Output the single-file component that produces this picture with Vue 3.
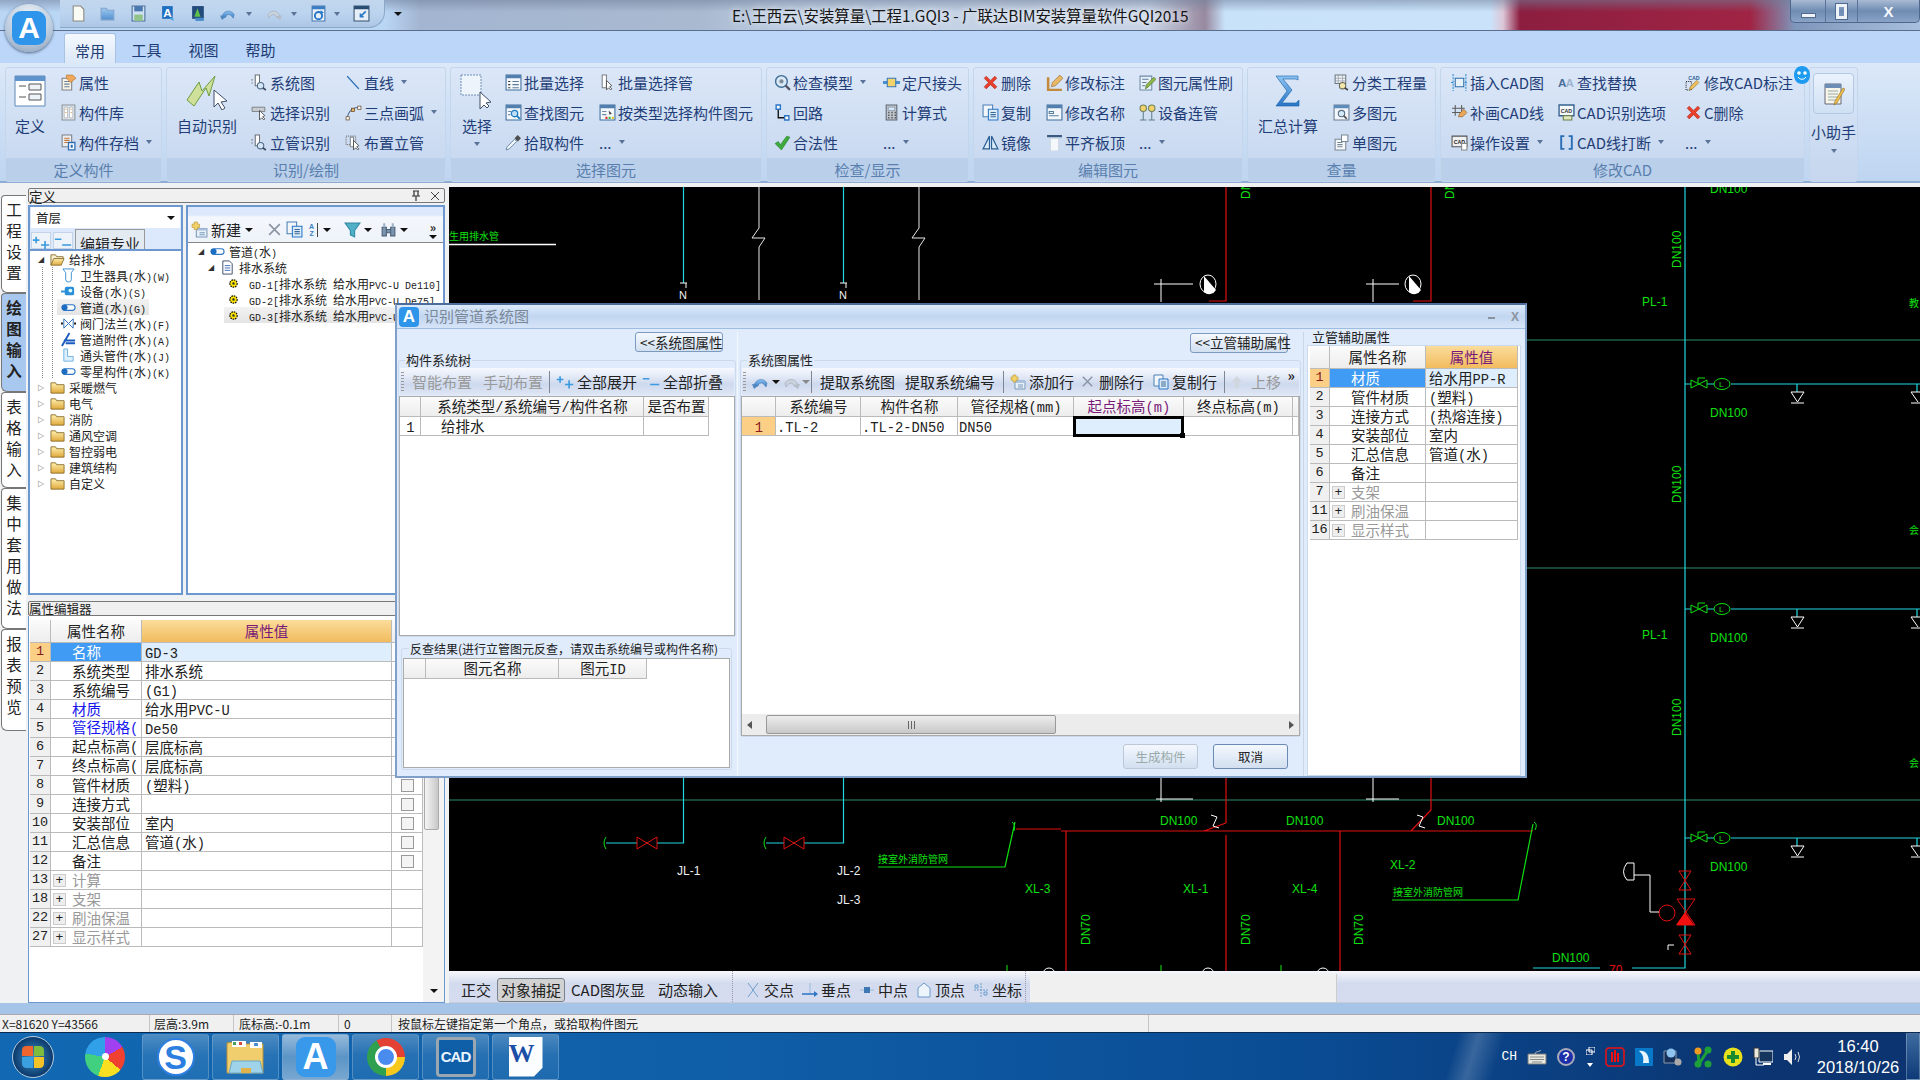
<template>
  <div class="app">
    <!-- shared icons -->
    <svg class="sprite" width="0" height="0">
      <defs>
        <linearGradient id="gBlue" x1="0" y1="0" x2="0" y2="1"><stop offset="0" stop-color="#8fc4f2" /><stop offset="1" stop-color="#2a76c6" /></linearGradient>
        <linearGradient id="gFolder" x1="0" y1="0" x2="0" y2="1"><stop offset="0" stop-color="#fff0b0" /><stop offset="1" stop-color="#e0a93a" /></linearGradient>
      </defs>
      <symbol id="i-doc" viewBox="0 0 16 16"><path d="M3 1h7l3 3v11H3z" fill="#fbfbf6" stroke="#8a8a80" /></symbol>
      <symbol id="i-open" viewBox="0 0 16 16"><path d="M1 14V3h5l1 2h6v9z" fill="url(#gBlue)" stroke="#6a90bd" opacity=".7" /></symbol>
      <symbol id="i-disk" viewBox="0 0 16 16"><path d="M2 1h12v14H2z" fill="#cfe0f2" stroke="#4d6f99" /><path d="M4 1h8v5H4z" fill="#4a78ae" /><path d="M4 9h8v6H4z" fill="#8fc38a" /></symbol>
      <symbol id="i-a" viewBox="0 0 16 16"><path d="M2 1h10v12H2z" fill="#1f6fc0" /><text x="3" y="11" class="ic-t" fill="#fff">A</text><path d="M9 13l4 2-1-4z" fill="#4aa3df" /></symbol>
      <symbol id="i-ag" viewBox="0 0 16 16"><path d="M2 1h11v12H2z" fill="#234a7c" /><path d="M7 3l3 8H4z" fill="#5fc04a" /><path d="M5 12h8v3H5z" fill="#4a8bc9" /></symbol>
      <symbol id="i-undo" viewBox="0 0 18 16"><path d="M2 12C3 5 11 3 15 9l-1 4C11 8 7 8 6 12z" fill="url(#gBlue)" stroke="#4f7eb2" stroke-width=".6" /><path d="M0 10l7 1-5 4z" fill="#4f86c0" /></symbol>
      <symbol id="i-redo" viewBox="0 0 18 16"><path d="M16 12C15 5 7 3 3 9l1 4c3-5 7-5 8-1z" fill="#c9d2dd" stroke="#9aa6b4" stroke-width=".6" /><path d="M18 10l-7 1 5 4z" fill="#b3bcc7" /></symbol>
      <symbol id="i-refresh" viewBox="0 0 16 16"><path d="M2 1h12v14H2z" fill="#e8f0fa" stroke="#4a78ae" /><path d="M2 1h12v3H2z" fill="#3b7dc2" /><circle cx="8" cy="10" r="3.4" fill="none" stroke="#2a76c6" stroke-width="1.8" /><path d="M10 5l3 2-3 2z" fill="#2a76c6" /></symbol>
      <symbol id="i-win" viewBox="0 0 16 16"><path d="M1 1h14v14H1z" fill="#e6eef7" stroke="#39536f" /><path d="M1 1h14v3H1z" fill="#274c73" /><path d="M12 6L7 11M7 8v3h3" fill="none" stroke="#2a76c6" stroke-width="1.5" /></symbol>

      <symbol id="i-prop" viewBox="0 0 16 16"><path d="M2 4h9v11H2z" fill="#f7f3e6" stroke="#7d8087" /><path d="M4 7h5M4 9.500h5M4 12h5" stroke="#6d7f96" /><path d="M6 1h6l3 3-5 4-4-4z" fill="#eea85c" stroke="#b66f2c" stroke-width=".6" /></symbol>
      <symbol id="i-lib" viewBox="0 0 16 16"><path d="M2 1h12v14H2z" fill="#dde3e8" stroke="#8b949c" /><path d="M4 3h3v10H4zM9 3h3v10H9z" fill="#fff" stroke="#a2a8ad" stroke-width=".6" /><path d="M5 5h1M5 8h1M10 5h1M10 8h1" stroke="#d59a4a" /></symbol>
      <symbol id="i-store" viewBox="0 0 16 16"><path d="M2 1h9v11H2z" fill="#eceff2" stroke="#7d8087" /><path d="M4 4h5M4 6h5M4 8h5" stroke="#c2773a" /><path d="M8 8h6v7H8z" fill="#fff" stroke="#2a6db5" stroke-width="1.2" /><path d="M10 10h2v3h-2z" fill="#2a6db5" /></symbol>
      <symbol id="i-sys" viewBox="0 0 16 16"><path d="M4 1h4v10H4z" fill="#fff" stroke="#6c7076" /><circle cx="9" cy="11" r="3" fill="#d5e7f7" stroke="#506c8a" /><path d="M11 13l3 2" stroke="#3d4c60" stroke-width="1.6" /><path d="M1 5v1M1 8v1" stroke="#555" /></symbol>
      <symbol id="i-line" viewBox="0 0 16 16"><path d="M2 2l11 12" stroke="#2a6db5" stroke-width="1.3" fill="none" /></symbol>
      <symbol id="i-pick" viewBox="0 0 16 16"><path d="M1 3h12v4H1z" fill="#c8cdd2" stroke="#666" stroke-width=".7" /><path d="M8 6v9l2-2 2 2 1-1-2-2 2-1z" fill="#fff" stroke="#444" stroke-width=".8" /></symbol>
      <symbol id="i-arc" viewBox="0 0 16 16"><path d="M2 14C3 6 8 3 14 3" fill="none" stroke="#4f6f8f" /><rect x="1" y="12" width="3" height="3" fill="#fff" stroke="#6a4a2a" stroke-width=".7" /><rect x="6" y="4" width="3" height="3" fill="#e9b468" stroke="#6a4a2a" stroke-width=".7" /><rect x="12" y="2" width="3" height="3" fill="#fff" stroke="#6a4a2a" stroke-width=".7" /></symbol>
      <symbol id="i-place" viewBox="0 0 16 16"><path d="M1 2h9v8H1z" fill="none" stroke="#777" stroke-dasharray="1 1" /><path d="M5 3h3v9H5z" fill="#fff" stroke="#6c7076" stroke-width=".8" /><path d="M8 6v9l2-2 2 2 1-1-2-2 2-1z" fill="#fff" stroke="#444" stroke-width=".8" /></symbol>
      <symbol id="i-batch" viewBox="0 0 16 16"><path d="M1 1h14v14H1z" fill="#f5f8fb" stroke="#3f6d9c" /><path d="M1 1h14v3H1z" fill="#527fae" /><path d="M3 7h2M3 10h2M3 13h2" stroke="#333" /><path d="M7 7h6M7 10h6M7 13h6" stroke="#5d7c9c" /></symbol>
      <symbol id="i-psel" viewBox="0 0 16 16"><path d="M3 1h4v12H3z" fill="#fff" stroke="#7d8188" /><path d="M7 6v9l2-2 2 2 1-1-2-2 2-1z" fill="#fff" stroke="#444" stroke-width=".8" /></symbol>
      <symbol id="i-find" viewBox="0 0 16 16"><path d="M1 1h14v14H1z" fill="#f5f8fb" stroke="#3f6d9c" /><path d="M1 1h14v3H1z" fill="#527fae" /><circle cx="9" cy="9" r="3" fill="#bfe0f7" stroke="#1c7cc4" stroke-width="1.2" /><path d="M11 11l3 3" stroke="#1c7cc4" stroke-width="1.8" /><path d="M3 7h3M3 10h2" stroke="#6a87a5" /></symbol>
      <symbol id="i-tsel" viewBox="0 0 16 16"><path d="M1 1h14v14H1z" fill="#f5f8fb" stroke="#3f6d9c" /><path d="M1 1h14v3H1z" fill="#527fae" /><path d="M3 7h4M3 10h4" stroke="#6a87a5" /><path d="M6 12h2v2H6z" fill="#d33" /><path d="M9 12h2v2H9z" fill="#4b4" /><path d="M12 12h2v2h-2z" fill="#dc3" /><path d="M9 6l3 3-2 1z" fill="#333" /></symbol>
      <symbol id="i-drop" viewBox="0 0 16 16"><path d="M1 15l1-3 7-7 2 2-7 7z" fill="#f2f6fa" stroke="#5a7f9f" stroke-width=".8" /><path d="M9 4l3-3 3 3-3 3z" fill="#4d4d4d" /></symbol>
      <symbol id="i-chk" viewBox="0 0 16 16"><circle cx="7" cy="7" r="5.500" fill="#d8e8f5" stroke="#3e6b95" stroke-width="1.3" /><circle cx="7" cy="7" r="2" fill="#7f8c99" /><path d="M11 11l4 4" stroke="#556" stroke-width="2.2" /></symbol>
      <symbol id="i-joint" viewBox="0 0 16 16"><path d="M0 8h16" stroke="#4a90d0" stroke-width="3" /><path d="M4 4h8v8H4z" fill="#f2d36a" stroke="#3877b8" /></symbol>
      <symbol id="i-loop" viewBox="0 0 16 16"><path d="M4 3v10h9" fill="none" stroke="#111" stroke-width="1.3" /><path d="M2 1h4v4H2zM10 11h4v4h-4z" fill="#fff" stroke="#2a76c6" stroke-width="1.3" /></symbol>
      <symbol id="i-calc" viewBox="0 0 16 16"><path d="M3 1h10v14H3z" fill="#bfc5cc" stroke="#5c6670" /><path d="M5 3h6v3H5z" fill="#d9ecfb" stroke="#6a7a8c" stroke-width=".5" /><path d="M5 8h1M8 8h1M11 8h1M5 10.500h1M8 10.500h1M11 10.500h1M5 13h1M8 13h1M11 13h1" stroke="#333" stroke-width="1.4" /></symbol>
      <symbol id="i-ok" viewBox="0 0 16 16"><path d="M1 9l3-2 2 3 6-8 3 1-8 12z" fill="#3faa3c" stroke="#1d7a22" stroke-width=".5" /></symbol>
      <symbol id="i-del" viewBox="0 0 16 16"><path d="M2 4l2-2 4 4 4-4 2 2-4 4 4 4-2 2-4-4-4 4-2-2 4-4z" fill="#e8402a" stroke="#a8241a" stroke-width=".5" /></symbol>
      <symbol id="i-label" viewBox="0 0 16 16"><path d="M2 3v12h13" fill="none" stroke="#c28a3a" stroke-width="2.400" /><path d="M5 12l1-4 7-7 3 3-7 7z" fill="#e7b868" stroke="#9a6a2a" stroke-width=".6" /></symbol>
      <symbol id="i-brush" viewBox="0 0 16 16"><path d="M1 2h11v13H1z" fill="#e9f0f7" stroke="#6d8aa8" /><path d="M3 5h6M3 8h4M3 11h3" stroke="#5a7f9f" /><path d="M6 14l1-4 7-7 2 2-7 7z" fill="#8fb648" stroke="#4b6f25" stroke-width=".6" /></symbol>
      <symbol id="i-copy" viewBox="0 0 16 16"><path d="M1 1h9v11H1z" fill="#f3f7fb" stroke="#4a7fb3" /><path d="M6 5h9v10H6z" fill="#dcebf8" stroke="#2a76c6" /><path d="M8 8h5M8 10h5M8 12h5" stroke="#3a6a9a" /></symbol>
      <symbol id="i-rename" viewBox="0 0 16 16"><path d="M1 1h14v14H1z" fill="#f3f7fb" stroke="#3f6d9c" /><path d="M1 1h14v3H1z" fill="#527fae" /><path d="M3 7h4v2H3zM3 11h9" stroke="#5a7f9f" fill="none" /></symbol>
      <symbol id="i-link" viewBox="0 0 16 16"><circle cx="4" cy="4" r="3" fill="#f2d36a" stroke="#6f7f55" /><circle cx="12" cy="4" r="3" fill="#f2d36a" stroke="#6f7f55" /><path d="M4 7v8M12 7v8M1 15h6M9 15h6" stroke="#5f7f8f" /></symbol>
      <symbol id="i-mirror" viewBox="0 0 16 16"><path d="M7 2v12H1zM9 2v12h6z" fill="#dcebf8" stroke="#2a5f96" stroke-width="1.1" /></symbol>
      <symbol id="i-align" viewBox="0 0 16 16"><path d="M1 1h14v2H1z" fill="#3a5a80" /><path d="M4 4h8v12H4z" fill="#f4f8fb" stroke="#cbd6e1" /></symbol>
      <symbol id="i-cat" viewBox="0 0 16 16"><path d="M2 1h10v8H2z" fill="#eef2f6" stroke="#6c7680" /><path d="M5 1v8M9 1v8M2 4h10M2 6.500h10" stroke="#8a929a" stroke-width=".6" /><circle cx="9" cy="11" r="3" fill="#f2e6a8" stroke="#6a6a5a" /><path d="M11 13l3 2" stroke="#444" stroke-width="1.6" /></symbol>
      <symbol id="i-multi" viewBox="0 0 16 16"><path d="M1 1h14v14H1z" fill="#f3f7fb" stroke="#6a7d90" /><path d="M1 1h14v3H1z" fill="#5d8cbb" /><circle cx="8" cy="9" r="3" fill="#d6e9f7" stroke="#5a6f84" /><path d="M10 11l3 3" stroke="#555" stroke-width="1.6" /></symbol>
      <symbol id="i-single" viewBox="0 0 16 16"><path d="M2 5h10v10H2z" fill="#f7fafc" stroke="#7a8794" /><path d="M8 1h6v6H8z" fill="#fff" stroke="#7a8794" /><path d="M4 8h5M4 10h5M4 12h5" stroke="#7a8794" /></symbol>
      <symbol id="i-cadin" viewBox="0 0 16 16"><path d="M4 4h8v8H4z" fill="#e7f2fb" stroke="#2f6fa8" /><path d="M2 0v16M14 0v16M0 8h3M13 8h3" stroke="#2f8fd0" stroke-dasharray="2 1" /></symbol>
      <symbol id="i-rep" viewBox="0 0 16 16"><text x="0" y="12" class="ic-t" fill="#4a6f9c">A</text><text x="7" y="12" class="ic-t" fill="#9db4cf">A</text></symbol>
      <symbol id="i-cadl" viewBox="0 0 16 16"><text x="3" y="6" class="ic-s" fill="#2a5f96">CAD</text><path d="M1 7h5v8H1z" fill="none" stroke="#222" stroke-dasharray="1 1" /><path d="M4 15l1-3 6-6 2 2-6 6z" fill="#edc25e" stroke="#96712a" stroke-width=".6" /></symbol>
      <symbol id="i-patch" viewBox="0 0 16 16"><path d="M1 4h12M1 8h12M4 1v10M10 1v10" stroke="#5c5c5c" /><path d="M7 12l1-3 4-4 3 3-4 4z" fill="#e8a75a" stroke="#8a5a25" stroke-width=".6" /></symbol>
      <symbol id="i-cado" viewBox="0 0 16 16"><path d="M1 1h14v10H1z" fill="#f5f8fb" stroke="#35618f" stroke-width="1.3" /><text x="2.500" y="8" class="ic-s" fill="#333">CAD</text><path d="M5 11h8v4H5z" fill="#dfe8c0" stroke="#6f7f4a" /></symbol>
      <symbol id="i-set" viewBox="0 0 16 16"><path d="M1 2h14v10H1z" fill="#eef0f2" stroke="#555" /><text x="2.500" y="9" class="ic-s" fill="#222">CAD</text><path d="M10 9h5v6h-5z" fill="#fff" stroke="#888" /></symbol>
      <symbol id="i-brk" viewBox="0 0 16 16"><path d="M6 2H3v12h3M10 2h3v12h-3" fill="none" stroke="#2a6db5" stroke-width="1.8" /></symbol>
      <symbol id="i-new" viewBox="0 0 16 16"><path d="M5 7h10v8H5z" fill="#e8f0f8" stroke="#7a9abc" /><path d="M5 7h10v2H5z" fill="#a9c3de" /><path d="M8 11h5M8 13h5" stroke="#7a9abc" /><path d="M3 1h3v2h2v3H6v2H3V6H1V3h2z" fill="#f2d36a" stroke="#b8962f" stroke-width=".6" /></symbol>
      <symbol id="i-plus" viewBox="0 0 22 16"><path d="M4 1h2v3h3v2H6v3H4V6H1V4h3z" fill="#3a9be0" /><path d="M15 6h2v4h4v2h-4v4h-2v-4h-4v-2h4z" fill="#3a9be0" /></symbol>
      <symbol id="i-minus" viewBox="0 0 22 16"><path d="M1 3h8v2H1zM10 10h11v2H10z" fill="#3a9be0" /></symbol>
      <symbol id="i-x" viewBox="0 0 16 16"><path d="M3 3l10 10M13 3L3 13" stroke="#8a93a0" stroke-width="1.5" /></symbol>
      <symbol id="i-gear" viewBox="0 0 16 16"><circle cx="8" cy="8" r="4.500" fill="#ffe800" stroke="#111" stroke-width="1.500" stroke-dasharray="2 1" /><circle cx="8" cy="8" r="1.500" fill="#333" /></symbol>
      <symbol id="i-pipe" viewBox="0 0 16 16"><rect x="1" y="5" width="14" height="6" rx="3" fill="#fff" stroke="#2a76c6" stroke-width="1.2" /><rect x="1" y="5" width="6" height="6" rx="3" fill="#1c6cc0" /></symbol>
      <symbol id="i-fix" viewBox="0 0 16 16"><path d="M2 1h12l-3 4v7a3 3 0 0 1-6 0V5z" fill="#fff" stroke="#3a8fd0" /></symbol>
      <symbol id="i-dev" viewBox="0 0 16 16"><rect x="4" y="3" width="10" height="9" rx="2" fill="#2a8fd8" /><path d="M0 8h6" stroke="#2a8fd8" stroke-width="2" /><circle cx="10" cy="7" r="2" fill="#dff" /></symbol>
      <symbol id="i-valve" viewBox="0 0 16 16"><path d="M0 8h2M14 8h2" stroke="#111" stroke-width="2" /><path d="M3 3l5 5-5 5zM13 3L8 8l5 5z" fill="#fff" stroke="#2a6db5" /></symbol>
      <symbol id="i-fit" viewBox="0 0 16 16"><path d="M1 15L9 1M3 9h12M5 12h10" stroke="#1c5cc0" stroke-width="2" /></symbol>
      <symbol id="i-elbow" viewBox="0 0 16 16"><path d="M3 1h4v8h6v5H3z" fill="#dcefff" stroke="#6fb1e3" /></symbol>
      <symbol id="i-fold" viewBox="0 0 16 16"><path d="M1 14V3h5l1 2h8v9z" fill="url(#gFolder)" stroke="#8f7332" /></symbol>
      <symbol id="i-foldo" viewBox="0 0 16 16"><path d="M1 14V3h5l1 2h7v2" fill="#f7efd0" stroke="#8f7332" /><path d="M1 14l3-7h11l-3 7z" fill="url(#gFolder)" stroke="#8f7332" /></symbol>
      <symbol id="i-page" viewBox="0 0 16 16"><path d="M3 1h7l3 3v11H3z" fill="#fff" stroke="#3a4a66" /><path d="M5 6h6M5 8.500h6M5 11h6" stroke="#3a6ab5" /></symbol>
      <symbol id="s-cross" viewBox="0 0 16 16"><path d="M3 1c2 3 4 5 5 7-1 2-3 4-5 7M13 1c-2 3-4 5-5 7 1 2 3 4 5 7" fill="none" stroke="#6a9ccc" /></symbol>
      <symbol id="s-perp" viewBox="0 0 16 16"><path d="M8 1v12" stroke="#9bbcd9" /><path d="M0 12h14" stroke="#2a76c6" stroke-width="1.500" /><path d="M12 9l4 3-4 3z" fill="#2a76c6" /></symbol>
      <symbol id="s-mid" viewBox="0 0 16 16"><path d="M1 8h14" stroke="#9bbcd9" /><path d="M5 5h6v6H5z" fill="#3c78b4" /></symbol>
      <symbol id="s-top" viewBox="0 0 16 16"><path d="M8 1l6 5v9H2V6z" fill="#eef4fb" stroke="#6a9ccc" /></symbol>
      <symbol id="s-xy" viewBox="0 0 16 16"><path d="M8 1v14M1 8h14" stroke="#6a9ccc" stroke-dasharray="2 1" /><path d="M2 3h3v3H2zM11 10h3v3h-3z" fill="none" stroke="#6a9ccc" /></symbol>
    </svg>

    <!-- title bar -->
    <div class="titlebar">
      <div class="qat">
        <template v-for="q in qat" :key="q.i">
          <svg class="qi" :style="{ marginRight: q.g + 'px' }"><use :href="'#i-' + q.i" /></svg>
          <i v-if="q.c" class="caret qc"></i>
        </template>
      </div>
      <div class="qmore"><i class="caret dark"></i></div>
      <div class="doc-title">E:\王西云\安装算量\工程1.GQI3 - 广联达BIM安装算量软件GQI2015</div>
      <div class="winbtns">
        <div class="wb wb-min"><b></b></div>
        <div class="wb wb-res"><b></b></div>
        <div class="wb wb-close">X</div>
      </div>
    </div>
    <div class="orb"><div class="orb-in">A</div></div>

    <!-- ribbon tabs -->
    <div class="tabs">
      <div v-for="(t, i) in ['常用', '工具', '视图', '帮助']" :key="t" class="tab" :class="{ on: i === 0 }">{{ t }}</div>
    </div>

    <!-- ribbon -->
    <div class="ribbon">
      <div v-for="g in ribbon" :key="g.label" class="rgroup" :style="{ width: g.w + 'px' }">
        <div class="rbody" :style="{ paddingLeft: (g.pad || 0) + 'px' }">
          <div v-if="g.big" class="bigbtn" :style="{ width: g.big.w + 'px', marginRight: (g.big.mr || 0) + 'px' }">
            <div class="bigicon">
              <svg v-if="g.big.kind === 'def'" width="32" height="34" viewBox="0 0 32 34"><path d="M1 2h30v30H1z" fill="#fff" stroke="#5e87b5" /><path d="M1 2h30v5H1z" fill="#5f93cc" /><path d="M5 12h7M5 23h7" stroke="#555" /><path d="M15 10h12v6H15zM15 20h12v6H15z" fill="#eef3f8" stroke="#555" /></svg>
              <svg v-if="g.big.kind === 'auto'" width="46" height="36" viewBox="0 0 46 36"><path d="M3 26L15 8l3 9 13-15-6 20-3-8-12 18z" fill="#cfe09a" stroke="#6d9c3f" /><path d="M30 16v17l4-4 4 7 3-2-4-6 6-1z" fill="#fff" stroke="#3f4d66" /></svg>
              <svg v-if="g.big.kind === 'sel'" width="36" height="36" viewBox="0 0 36 36"><path d="M2 1h20v20H2z" fill="#eef4fc" stroke="#6f8fb5" stroke-dasharray="2 1" /><path d="M21 18v17l4-4 3 3 2-2-3-3 5-1z" fill="#fff" stroke="#3f4d66" /></svg>
              <svg v-if="g.big.kind === 'sum'" width="30" height="34" viewBox="0 0 30 34"><path d="M3 2h22v4l-2-1H10l9 11-10 13h14l3-3v6H3l11-15z" fill="url(#gBlue)" stroke="#0f5ea8" stroke-width=".6" /></svg>
            </div>
            <div class="bigtext">{{ g.big.t }}</div>
            <i v-if="g.big.caret" class="caret big-c"></i>
          </div>
          <div v-for="(c, ci) in g.cols" :key="ci" class="rcol" :style="{ width: c.w + 'px' }">
            <div v-for="it in c.items" :key="it.t + it.i" class="ritem">
              <svg v-if="it.i" class="ri"><use :href="'#i-' + it.i" /></svg>
              <span class="rt">{{ it.t }}</span>
              <i v-if="it.c" class="caret"></i>
            </div>
          </div>
        </div>
        <div class="rlabel">{{ g.label }}</div>
      </div>
      <div class="rgroup helper">
        <div class="hp-btn">
          <svg width="22" height="24" viewBox="0 0 22 24"><path d="M2 2h16v20H2z" fill="#f7f5ea" stroke="#667" /><path d="M2 2h16v4H2z" fill="#6c8db5" /><path d="M5 9h10M5 12h10M5 15h10M5 18h10" stroke="#9aa" /><path d="M20 6l2 1-8 14-3 2 1-4z" fill="#efc04c" stroke="#7a5a1f" stroke-width=".5" /></svg>
        </div>
        <div class="hp-t">小助手</div>
        <i class="caret"></i>
        <div class="hp-face"><svg width="18" height="20" viewBox="0 0 18 20"><path d="M9 1c5 0 8 4 8 9s-3 9-8 9-8-4-8-9 3-9 8-9z" fill="#1e9bf0" /><circle cx="6" cy="8" r="1.800" fill="#fff" /><circle cx="12" cy="8" r="1.800" fill="#fff" /><path d="M5 12c2 3 6 3 8 0" stroke="#fff" fill="none" /></svg></div>
      </div>
    </div>

    <!-- work area -->
    <div class="work">
      <div class="vtabs">
        <div v-for="v in vtabs" :key="v.t" class="vtab" :class="{ on: v.on }" :style="{ height: v.h + 'px' }">
          <span v-for="(ch, i) in v.t" :key="i">{{ ch }}</span>
        </div>
      </div>

      <div class="dock">
        <div class="dock-title">
          <span>定义</span>
          <span class="dt-icons">
            <svg width="10" height="11" viewBox="0 0 10 11"><path d="M2 1h6M3 1v5h4V1M1 6h8M5 6v5" stroke="#333" fill="none" stroke-width="1.200" /></svg>
            <svg width="10" height="10" viewBox="0 0 10 10"><path d="M1 1l8 8M9 1L1 9" stroke="#444" fill="none" /></svg>
          </span>
        </div>
        <div class="panes">
          <div class="pane pane-l">
            <div class="combo"><Sim t="首层" /><i class="caret dark big"></i></div>
            <div class="tabrow">
              <div class="mini"><svg width="18" height="13"><use href="#i-plus" /></svg></div>
              <div class="mini"><svg width="18" height="13"><use href="#i-minus" /></svg></div>
              <div class="pro-tab">编辑专业</div>
            </div>
            <div class="tree tree-l">
              <div class="troot">
                <span class="exp">◢</span><svg class="ti"><use href="#i-foldo" /></svg><Sim t="给排水" />
              </div>
              <div class="kids">
                <div v-for="k in waterKids" :key="k.t" class="tkid" :class="{ sel: k.sel }">
                  <svg class="ti"><use :href="'#i-' + k.i" /></svg><Sim :t="k.t" />
                </div>
              </div>
              <div v-for="f in folders" :key="f" class="troot">
                <span class="exp hollow">▷</span><svg class="ti"><use href="#i-fold" /></svg><Sim :t="f" />
              </div>
            </div>
          </div>
          <div class="pane pane-r">
            <div class="tree-tb">
              <svg class="ri new"><use href="#i-new" /></svg><span class="ttb-t">新建</span><i class="caret dark"></i>
              <svg class="ri gap"><use href="#i-x" /></svg>
              <svg class="ri"><use href="#i-copy" /></svg>
              <span class="az gap3">A<br />Z</span><b class="azline"></b><i class="caret dark"></i>
              <svg class="ri gap-f" viewBox="0 0 16 16"><path d="M1 2h14L10 9v6l-4-2V9z" fill="#4fb0c8" stroke="#2f8aa5" /></svg><i class="caret dark"></i>
              <svg class="ri gap-b" viewBox="0 0 16 16"><path d="M2 6h4v8H2zM10 6h4v8h-4zM6 8h4v3H6z" fill="#7c93ad" stroke="#4c617a" /><path d="M3 2h2v4H3zM11 2h2v4h-2z" fill="#9fb3c8" /></svg><i class="caret dark"></i>
              <span class="more-r">»<i class="caret dark"></i></span>
            </div>
            <div class="tree tree-r">
              <div class="rrow lv0"><span class="exp">◢</span><svg class="ti"><use href="#i-pipe" /></svg><Sim t="管道(水)" /></div>
              <div class="rrow lv1"><span class="exp">◢</span><svg class="ti"><use href="#i-page" /></svg><Sim t="排水系统" /></div>
              <div v-for="n in gdList" :key="n.t" class="rrow lv2" :class="{ sel: n.sel }">
                <svg class="ti"><use href="#i-gear" /></svg><Sim :t="n.t" />
              </div>
            </div>
          </div>
        </div>
        <div class="dock-title second"><span>属性编辑器</span></div>
        <div class="props">
          <div class="props-t tlat">
            <div class="pr pr-h">
              <div class="c"></div>
              <div class="c ctr"><Sim t="属性名称" /></div>
              <div class="c ctr orange"><Sim t="属性值" /></div>
              <div class="c"></div>
            </div>
            <div v-for="r in leftProps" :key="r.n" class="pr">
              <div class="c num" :class="{ numsel: r.sel }">{{ r.n }}</div>
              <div class="c name" :class="{ namesel: r.sel, blue: r.blue, grey: r.group }">
                <span v-if="r.group" class="pbox">+</span>
                <Sim :t="r.name" />
              </div>
              <div class="c val" :class="{ valsel: r.sel }"><Sim :t="r.val || ''" /></div>
              <div class="c chk"><span v-if="!r.group" class="cb"></span></div>
            </div>
          </div>
          <div class="vscroll">
            <div class="vthumb"></div>
            <i class="caret dark"></i>
          </div>
        </div>
      </div>

      <div class="canvas-col">
        <svg class="cad" viewBox="449 187 1471 784" width="1471" height="784">
          <!-- floor lines -->
          <path d="M449 340H1920M449 568H1920M449 800H1920" stroke="#2f8f68" fill="none" />
          <!-- cyan risers -->
          <path d="M683.500 187V283M843.500 187V283M683.500 770V843H606M843.500 770V843H766" stroke="#21d8e0" fill="none" stroke-width="1.200" />
          <path d="M1685 187V968H1632M1600 968H1533" stroke="#21d8e0" fill="none" stroke-width="1.200" />
          <!-- white pipes -->
          <path d="M759 187V228L752 238L765 238L759 247V300M919 187V228L912 238L925 238L919 247V300" stroke="#e8e8e8" fill="none" />
          <path d="M449 244.500H556" stroke="#fff" stroke-width="1.500" />
          <path d="M1154 284H1193M1161 279V302M1366 284H1399M1373 279V302M1156 799H1193M1161 778V802M1366 799H1399M1373 778V802" stroke="#fff" fill="none" />
          <g v-for="x in [683, 843]" :key="x">
            <path :d="`M${x - 3} 283h7M${x + 3} 283v5`" stroke="#fff" fill="none" />
            <text :x="x - 4" y="299" class="t-w small">N</text>
          </g>
          <!-- butterfly marks on the red risers -->
          <g v-for="x in [1208, 1413]" :key="x">
            <ellipse :cx="x" cy="284" rx="8" ry="9" fill="#000" stroke="#fff" />
            <path :d="`M${x - 4} 276L${x + 8} 290A8 9 0 0 1 ${x - 4} 292z`" fill="#fff" />
          </g>
          <!-- red supply -->
          <path d="M1226 187V301H1209M1431 187V301H1413M1226 778V823M1431 778V810L1411 831M1016 829H1061M1061 831H1533M1066 831V971M1226 835V971M1340 831V971M1226 823L1204 831" stroke="#e01010" fill="none" stroke-width="1.200" />
          <!-- green notes -->
          <path d="M1015 822L1005 867H878M1533 824L1518 900H1392" stroke="#10e010" fill="none" stroke-width="1.200" />
          <path d="M1012 822q4 3 2 9M1534 822q4 2 1 8M606 837q-4 6 0 12M766 837q-4 6 0 12" stroke="#10e010" fill="none" />
          <path d="M1211 815l6 2-4 9 6 2M1417 815l6 2-4 9 6 2" stroke="#fff" fill="none" />
          <!-- small valves on branches -->
          <g v-for="x in [647, 794]" :key="x">
            <path :d="`M${x - 10} 837V849L${x + 10} 837V849Z`" fill="#000" stroke="#e01010" />
          </g>
          <!-- labels -->
          <text x="449" y="240" class="t-g cjk">生用排水管</text>
          <text x="878" y="863" class="t-g cjk">接室外消防管网</text>
          <text x="1393" y="896" class="t-g cjk">接室外消防管网</text>
          <text x="1160" y="825" class="t-g">DN100</text>
          <text x="1286" y="825" class="t-g">DN100</text>
          <text x="1437" y="825" class="t-g">DN100</text>
          <text x="1025" y="893" class="t-g">XL-3</text>
          <text x="1183" y="893" class="t-g">XL-1</text>
          <text x="1292" y="893" class="t-g">XL-4</text>
          <text x="1390" y="869" class="t-g">XL-2</text>
          <text x="677" y="875" class="t-w">JL-1</text>
          <text x="837" y="875" class="t-w">JL-2</text>
          <text x="837" y="904" class="t-w">JL-3</text>
          <text v-for="x in [1090, 1250, 1363]" :key="x" class="t-g" :transform="`translate(${x} 945) rotate(-90)`">DN70</text>
          <text v-for="x in [1250, 1454]" :key="x" class="t-g" :transform="`translate(${x} 199) rotate(-90)`">DN</text>
          <text v-for="y in [268, 503, 736]" :key="y" class="t-g" :transform="`translate(1681 ${y}) rotate(-90)`">DN100</text>
          <text x="1642" y="306" class="t-g">PL-1</text>
          <text x="1642" y="639" class="t-g">PL-1</text>
          <text x="1710" y="193" class="t-g">DN100</text>
          <text x="1552" y="962" class="t-g">DN100</text>
          <text x="1609" y="974" class="t-r">70</text>
          <text x="1909" y="307" class="t-g cjk">教</text>
          <text x="1909" y="534" class="t-g cjk">会</text>
          <text x="1909" y="767" class="t-g cjk">会</text>
          <!-- branches on the main riser -->
          <g v-for="y in branches" :key="y">
            <path :d="`M1685 ${y}H1691M1707 ${y}H1714M1731 ${y}H1920M1797 ${y}V${y + 8}M1917 ${y}V${y + 8}`" stroke="#21d8e0" fill="none" stroke-width="1.200" />
            <path :d="`M1691 ${y - 4}V${y + 4}L1707 ${y - 4}V${y + 4}ZM1698 ${y - 1}V${y - 6}H1705`" stroke="#10e010" fill="none" />
            <ellipse cx="1722" :cy="y" rx="8" ry="5.500" fill="none" stroke="#10e010" />
            <text x="1719" :y="y + 3" class="t-g tiny">L</text>
            <path :d="`M1791 ${y + 8}H1804L1797.500 ${y + 18}ZM1791 ${y + 19}H1804M1911 ${y + 8}H1920M1911 ${y + 8}L1918 ${y + 18}M1911 ${y + 19}H1920`" stroke="#fff" fill="none" />
            <text x="1710" :y="y + 33" class="t-g">DN100</text>
          </g>
          <!-- pump set -->
          <path d="M1679 871h12l-12 19h12zM1677 899h18l-18 26h18zM1679 935h12l-12 19h12z" fill="none" stroke="#e01010" />
          <path d="M1685 912l-9 13h18z" fill="#f01010" />
          <ellipse cx="1667" cy="913" rx="8" ry="8" fill="none" stroke="#e01010" />
          <path d="M1634 863v17h-7q-7-8 0-17zM1634 875h16v37h9M1674 945h-6v5" fill="none" stroke="#fff" />
          <g fill="none" stroke="#fff"><ellipse cx="1049" cy="974" rx="6" ry="6" /><ellipse cx="1208" cy="974" rx="6" ry="6" /><ellipse cx="1323" cy="974" rx="6" ry="6" /></g>
          <path d="M1007 965v6M1161 965v6M1281 965v6" stroke="#10e010" />
        </svg>
        <div class="snapbar">
          <div class="snapgroup">
            <span class="snap">正交</span>
            <span class="snap active">对象捕捉</span>
            <span class="snap">CAD图灰显</span>
            <span class="snap">动态输入</span>
          </div>
          <div class="snapgroup second">
            <span v-for="s in snaps" :key="s.t" class="snap2"><svg class="snapmark"><use :href="'#s-' + s.m" /></svg>{{ s.t }}</span>
          </div>
          <div class="snapblank"></div>
        </div>
      </div>
    </div>
    <div class="strip"></div>

    <!-- status bar -->
    <div class="status">
      <div class="st s1">X=81620 Y=43566</div>
      <div class="st s2">层高:3.9m</div>
      <div class="st s3">底标高:-0.1m</div>
      <div class="st s4">0</div>
      <div class="st s5">按鼠标左键指定第一个角点，或拾取构件图元</div>
      <div class="st s6"></div>
    </div>

    <!-- taskbar -->
    <div class="taskbar">
      <div class="start"><i class="w1"></i><i class="w2"></i><i class="w3"></i><i class="w4"></i></div>
      <div class="wheel"><i></i></div>
      <div class="tb-btn"><div class="sogou">S</div></div>
      <div class="tb-btn">
        <svg width="44" height="40" viewBox="0 0 44 40"><path d="M3 36V6l12-2 2 3h22v29z" fill="#f0cd6d" stroke="#b8923c" /><path d="M8 4h14v6H8z" fill="#fff" /><path d="M26 5h12v6H26z" fill="#fff" /><path d="M9 5h3v3H9z" fill="#4aa05a" /><path d="M15 5h3v3h-3z" fill="#d04a3a" /><path d="M30 6h4v3h-4z" fill="#4a90d0" /><path d="M8 24h28l3 12H5z" fill="#9fd3ea" stroke="#6ba9c9" /><path d="M17 31h10v5H17z" fill="#e2b34a" /></svg>
      </div>
      <div class="tb-btn active"><div class="alogo">A</div></div>
      <div class="tb-btn"><div class="chrome"><i></i></div></div>
      <div class="tb-btn"><div class="cadlogo">CAD</div></div>
      <div class="tb-btn">
        <div class="wordlogo"><span>W</span></div>
      </div>
      <div class="tray">
        <span class="ch">CH</span>
        <svg class="tri" width="20" height="16" viewBox="0 0 20 16"><path d="M1 5h18v10H1z" fill="#e8e8e0" stroke="#777" /><path d="M3 8h14M3 10.500h14M5 13h10" stroke="#888" /><path d="M8 5C8 2 13 3 14 1" stroke="#bbb" fill="none" /></svg>
        <span class="helpic">?</span>
        <span class="trayflag"><svg width="9" height="8" viewBox="0 0 9 8"><path d="M3 0h6v5H3zM0 3h6v5H0z" fill="#0c3672" stroke="#fff" /></svg><i class="caret white"></i></span>
        <svg class="tri" width="20" height="20" viewBox="0 0 20 20"><path d="M3 1h14l2 2v14l-2 2H3l-2-2V3z" fill="none" stroke="#f01010" stroke-width="1.500" /><path d="M6 5h2v10H6zM9 3h2v12H9zM12 6h2v9h-2z" fill="#f01010" /></svg>
        <svg class="tri" width="18" height="18" viewBox="0 0 18 18"><path d="M0 0h18v18H0z" fill="#0a78c8" /><path d="M4 3c6-1 10 3 10 12H8C9 10 8 6 4 3z" fill="#e8f5ff" /></svg>
        <svg class="tri" width="20" height="20" viewBox="0 0 20 20"><path d="M1 4h12v12H1z" fill="#16305c" stroke="#89a" /><circle cx="8" cy="6" r="4.500" fill="#8ec3f0" /><circle cx="15" cy="15" r="3.500" fill="#aaa" /></svg>
        <svg class="tri" width="20" height="22" viewBox="0 0 20 22"><path d="M5 6l1 12L15 4" stroke="#1d9f3a" stroke-width="3" fill="none" /><circle cx="5" cy="5" r="3.500" fill="#f09a1f" /><circle cx="15" cy="4" r="3.500" fill="#1d9f3a" /><circle cx="5" cy="18" r="3.500" fill="#1d9f3a" /><circle cx="15" cy="18" r="3.500" fill="#1d9f3a" /></svg>
        <svg class="tri" width="20" height="20" viewBox="0 0 20 20"><circle cx="10" cy="10" r="9.500" fill="#e8e01a" /><path d="M8 4h4v4h4v4h-4v4H8v-4H4V8h4z" fill="#1a8a30" /></svg>
        <svg class="tri" width="20" height="20" viewBox="0 0 20 20"><path d="M6 4h14v11H6z" fill="#14365e" stroke="#fff" /><path d="M10 17h8" stroke="#fff" stroke-width="2" /><path d="M1 1h5v10H1z" fill="#e9e9e0" stroke="#333" /><path d="M3 11v7h8" stroke="#fff" fill="none" /></svg>
        <svg class="tri" width="20" height="20" viewBox="0 0 20 20"><path d="M1 7h3l5-5v16l-5-5H1z" fill="#eee" /><path d="M12 7q2 3 0 6M15 5q3 5 0 10" stroke="#ddd" fill="none" /></svg>
        <div class="clock"><div>16:40</div><div>2018/10/26</div></div>
        <div class="showdesk"></div>
      </div>
    </div>

    <!-- floating dialog -->
    <div class="dlg">
      <div class="dlg-title">
        <span class="dlg-logo">A</span>
        <span class="dlg-name">识别管道系统图</span>
        <span class="dlg-min"></span>
        <span class="dlg-x">X</span>
      </div>
      <div class="dlg-body">
        <div class="col-l">
          <div class="btnrow"><button class="dbtn">&lt;&lt;系统图属性</button></div>
          <div class="gbox gbox-top">
            <div class="glabel">构件系统树</div>
            <div class="dtb">
              <i class="grip"></i>
              <span class="tbi dis">智能布置</span>
              <span class="tbi dis">手动布置</span>
              <i class="tsep"></i>
              <span class="tbi"><svg width="18" height="14"><use href="#i-plus" /></svg>全部展开</span>
              <span class="tbi"><svg width="18" height="14"><use href="#i-minus" /></svg>全部折叠</span>
            </div>
            <div class="grid tlat">
              <div class="gr gr-h g-tree">
                <div class="gc"></div><div class="gc ctr"><Sim t="系统类型/系统编号/构件名称" /></div><div class="gc ctr"><Sim t="是否布置" /></div>
              </div>
              <div class="gr g-tree">
                <div class="gc ctr"><Sim t="1" /></div><div class="gc ind"><Sim t="给排水" /></div><div class="gc"></div>
              </div>
            </div>
          </div>
          <div class="gbox gbox-bot">
            <div class="glabel small">反查结果(进行立管图元反查，请双击系统编号或构件名称)</div>
            <div class="grid tlat">
              <div class="gr gr-h g-back">
                <div class="gc"></div><div class="gc ctr"><Sim t="图元名称" /></div><div class="gc ctr"><Sim t="图元ID" /></div>
              </div>
            </div>
          </div>
        </div>

        <div class="col-m">
          <div class="btnrow"></div>
          <div class="gbox gbox-mid">
            <div class="glabel">系统图属性</div>
            <div class="dtb">
              <i class="grip gm"></i>
              <svg class="undo" width="18" height="16"><use href="#i-undo" /></svg><i class="caret dark"></i>
              <svg class="undo" width="18" height="16"><use href="#i-redo" /></svg><i class="caret grey"></i>
              <i class="tsep"></i>
              <span class="tbi wide">提取系统图</span>
              <span class="tbi wide second">提取系统编号</span>
              <i class="tsep ml"></i>
              <span class="tbi"><svg width="16" height="16"><use href="#i-new" /></svg>添加行</span>
              <span class="tbi"><svg width="17" height="15"><use href="#i-x" /></svg>删除行</span>
              <span class="tbi ml4"><svg width="16" height="16"><use href="#i-copy" /></svg>复制行</span>
              <i class="tsep ml"></i>
              <span class="tbi dis up"><svg width="12" height="14" viewBox="0 0 12 14"><path d="M6 1l5 6H8v6H4V7H1z" fill="#cfd6de" /></svg>上移</span>
              <span class="tmore">»</span>
            </div>
            <div class="grid mid tlat">
              <div class="gr gr-h g-mid">
                <div class="gc"></div>
                <div class="gc ctr"><Sim t="系统编号" /></div>
                <div class="gc ctr"><Sim t="构件名称" /></div>
                <div class="gc ctr"><Sim t="管径规格(mm)" /></div>
                <div class="gc ctr orange"><Sim t="起点标高(m)" /></div>
                <div class="gc ctr"><Sim t="终点标高(m)" /></div>
                <div class="gc"></div>
              </div>
              <div class="gr g-mid">
                <div class="gc ctr numsel"><Sim t="1" /></div>
                <div class="gc"><Sim t=".TL-2" /></div>
                <div class="gc"><Sim t=".TL-2-DN50" /></div>
                <div class="gc"><Sim t="DN50" /></div>
                <div class="gc cellsel"><i></i></div>
                <div class="gc"></div>
                <div class="gc"></div>
              </div>
              <div class="hscroll">
                <i class="arr l"></i>
                <div class="hthumb"><span></span></div>
                <i class="arr r"></i>
              </div>
            </div>
          </div>
          <div class="dlg-actions">
            <button class="dbtn off">生成构件</button>
            <button class="dbtn cancel">取消</button>
          </div>
        </div>

        <div class="col-r">
          <div class="rlab">立管辅助属性</div>
          <div class="rbtn-float"><button class="dbtn">&lt;&lt;立管辅助属性</button></div>
          <div class="rpanel tlat">
            <div class="pr2 pr-h">
              <div class="c"></div>
              <div class="c ctr"><Sim t="属性名称" /></div>
              <div class="c ctr orange"><Sim t="属性值" /></div>
            </div>
            <div v-for="r in rightProps" :key="r.n" class="pr2">
              <div class="c num" :class="{ numsel: r.sel }">{{ r.n }}</div>
              <div class="c name" :class="{ namesel: r.sel, grey: r.group }">
                <span v-if="r.group" class="pbox">+</span>
                <Sim :t="r.name" />
              </div>
              <div class="c val" :class="{ valsel: r.sel }"><Sim :t="r.val || ''" /></div>
            </div>
          </div>
        </div>
      </div>
    </div>
  </div>
</template>

<script setup>
import { h } from 'vue'

// simsun style text: latin runs take half the width of a CJK char
const Sim = (props) =>
  h(
    'span',
    String(props.t)
      .split(/([\x20-\x7e]+)/)
      .filter(Boolean)
      .map((s) => (/^[\x20-\x7e]+$/.test(s) ? h('span', { class: 'lat' }, s) : h('span', s))),
  )
Sim.props = ['t']

const qat = [
  { i: 'doc', g: 13 },
  { i: 'open', g: 13 },
  { i: 'disk', g: 13 },
  { i: 'a', g: 13 },
  { i: 'ag', g: 13 },
  { i: 'undo', g: 9, c: true },
  { i: 'redo', g: 9, c: true },
  { i: 'refresh', g: 7, c: true },
  { i: 'win', g: 0 },
]

const ribbon = [
  {
    label: '定义构件',
    w: 157,
    big: { kind: 'def', t: '定义', w: 48, mr: 6 },
    cols: [
      {
        w: 100,
        items: [
          { i: 'prop', t: '属性' },
          { i: 'lib', t: '构件库' },
          { i: 'store', t: '构件存档', c: true },
        ],
      },
    ],
  },
  {
    label: '识别/绘制',
    w: 280,
    big: { kind: 'auto', t: '自动识别', w: 80, mr: 4 },
    cols: [
      {
        w: 94,
        items: [
          { i: 'sys', t: '系统图' },
          { i: 'pick', t: '选择识别' },
          { i: 'sys', t: '立管识别' },
        ],
      },
      {
        w: 100,
        items: [
          { i: 'line', t: '直线', c: true },
          { i: 'arc', t: '三点画弧', c: true },
          { i: 'place', t: '布置立管' },
        ],
      },
    ],
  },
  {
    label: '选择图元',
    w: 312,
    big: { kind: 'sel', t: '选择', w: 52, mr: 2, caret: true },
    cols: [
      {
        w: 94,
        items: [
          { i: 'batch', t: '批量选择' },
          { i: 'find', t: '查找图元' },
          { i: 'drop', t: '拾取构件' },
        ],
      },
      {
        w: 160,
        items: [
          { i: 'psel', t: '批量选择管' },
          { i: 'tsel', t: '按类型选择构件图元' },
          { t: '...', c: true },
        ],
      },
    ],
  },
  {
    label: '检查/显示',
    w: 203,
    pad: 7,
    cols: [
      {
        w: 109,
        items: [
          { i: 'chk', t: '检查模型', c: true },
          { i: 'loop', t: '回路' },
          { i: 'ok', t: '合法性' },
        ],
      },
      {
        w: 86,
        items: [
          { i: 'joint', t: '定尺接头' },
          { i: 'calc', t: '计算式' },
          { t: '...', c: true },
        ],
      },
    ],
  },
  {
    label: '编辑图元',
    w: 270,
    pad: 8,
    cols: [
      {
        w: 64,
        items: [
          { i: 'del', t: '删除' },
          { i: 'copy', t: '复制' },
          { i: 'mirror', t: '镜像' },
        ],
      },
      {
        w: 93,
        items: [
          { i: 'label', t: '修改标注' },
          { i: 'rename', t: '修改名称' },
          { i: 'align', t: '平齐板顶' },
        ],
      },
      {
        w: 100,
        items: [
          { i: 'brush', t: '图元属性刷' },
          { i: 'link', t: '设备连管' },
          { t: '...', c: true },
        ],
      },
    ],
  },
  {
    label: '查量',
    w: 189,
    big: { kind: 'sum', t: '汇总计算', w: 80, mr: 5 },
    cols: [
      {
        w: 100,
        items: [
          { i: 'cat', t: '分类工程量' },
          { i: 'multi', t: '多图元' },
          { i: 'single', t: '单图元' },
        ],
      },
    ],
  },
  {
    label: '修改CAD',
    w: 365,
    pad: 10,
    cols: [
      {
        w: 107,
        items: [
          { i: 'cadin', t: '插入CAD图' },
          { i: 'patch', t: '补画CAD线' },
          { i: 'set', t: '操作设置', c: true },
        ],
      },
      {
        w: 127,
        items: [
          { i: 'rep', t: '查找替换' },
          { i: 'cado', t: 'CAD识别选项' },
          { i: 'brk', t: 'CAD线打断', c: true },
        ],
      },
      {
        w: 118,
        items: [
          { i: 'cadl', t: '修改CAD标注' },
          { i: 'del', t: 'C删除' },
          { t: '...', c: true },
        ],
      },
    ],
  },
]

const vtabs = [
  { t: '工程设置', h: 98 },
  { t: '绘图输入', h: 99, on: true },
  { t: '表格输入', h: 96 },
  { t: '集中套用做法', h: 141 },
  { t: '报表预览', h: 102 },
]

const waterKids = [
  { i: 'fix', t: '卫生器具(水)(W)' },
  { i: 'dev', t: '设备(水)(S)' },
  { i: 'pipe', t: '管道(水)(G)', sel: true },
  { i: 'valve', t: '阀门法兰(水)(F)' },
  { i: 'fit', t: '管道附件(水)(A)' },
  { i: 'elbow', t: '通头管件(水)(J)' },
  { i: 'pipe', t: '零星构件(水)(K)' },
]
const folders = ['采暖燃气', '电气', '消防', '通风空调', '智控弱电', '建筑结构', '自定义']

const gdList = [
  { t: 'GD-1[排水系统 给水用PVC-U De110]' },
  { t: 'GD-2[排水系统 给水用PVC-U De75]' },
  { t: 'GD-3[排水系统 给水用PVC-U De50]', sel: true },
]

const leftProps = [
  { n: 1, name: '名称', val: 'GD-3', sel: true },
  { n: 2, name: '系统类型', val: '排水系统' },
  { n: 3, name: '系统编号', val: '(G1)' },
  { n: 4, name: '材质', val: '给水用PVC-U', blue: true },
  { n: 5, name: '管径规格(', val: 'De50', blue: true },
  { n: 6, name: '起点标高(', val: '层底标高' },
  { n: 7, name: '终点标高(', val: '层底标高' },
  { n: 8, name: '管件材质', val: '(塑料)' },
  { n: 9, name: '连接方式' },
  { n: 10, name: '安装部位', val: '室内' },
  { n: 11, name: '汇总信息', val: '管道(水)' },
  { n: 12, name: '备注' },
  { n: 13, name: '计算', group: true },
  { n: 18, name: '支架', group: true },
  { n: 22, name: '刷油保温', group: true },
  { n: 27, name: '显示样式', group: true },
]

const rightProps = [
  { n: 1, name: '材质', val: '给水用PP-R', sel: true },
  { n: 2, name: '管件材质', val: '(塑料)' },
  { n: 3, name: '连接方式', val: '(热熔连接)' },
  { n: 4, name: '安装部位', val: '室内' },
  { n: 5, name: '汇总信息', val: '管道(水)' },
  { n: 6, name: '备注' },
  { n: 7, name: '支架', group: true },
  { n: 11, name: '刷油保温', group: true },
  { n: 16, name: '显示样式', group: true },
]

const branches = [384, 609, 838]

const snaps = [
  { m: 'cross', t: '交点' },
  { m: 'perp', t: '垂点' },
  { m: 'mid', t: '中点' },
  { m: 'top', t: '顶点' },
  { m: 'xy', t: '坐标' },
]
</script>

<style>
html,
body {
  margin: 0;
  overflow: hidden;
}
.lat {
  font-family: "Liberation Mono", monospace;
  font-size: 0.8333em;
  white-space: pre;
}
.tlat .lat {
  font-size: 0.95em;
}
</style>

<style scoped>
* {
  box-sizing: border-box;
}
.app {
  position: relative;
  width: 1920px;
  height: 1080px;
  overflow: hidden;
  display: flex;
  flex-direction: column;
  background: #a6c3e8;
  font-family: "Noto Sans CJK SC", "Liberation Sans", sans-serif;
  font-size: 14px;
  color: #222;
}
.sprite {
  position: absolute;
}
.ic-t {
  font: bold 11px "Liberation Sans", sans-serif;
}
.ic-s {
  font: bold 5px "Liberation Sans", sans-serif;
}
.caret {
  display: inline-block;
  width: 0;
  height: 0;
  border: 3px solid transparent;
  border-top: 4px solid #5a7399;
  border-bottom: 0;
  flex: none;
}
.caret.dark {
  border-top-color: #111;
  border-width: 4px 4px 0;
}
.caret.grey {
  border-top-color: #888;
  border-width: 4px 4px 0;
}
.caret.white {
  border-top-color: #fff;
}
.caret.qc {
  margin-right: 13px;
}

/* title bar */
.titlebar {
  height: 31px;
  display: flex;
  align-items: flex-start;
  flex: none;
  padding-left: 60px;
  border-bottom: 1px solid #5b6f8c;
  background:
    linear-gradient(#6f7f9a88, transparent 40%),
    linear-gradient(90deg, #b9d6f5 0, #b9d6f5 385px, #a3b5d1 420px, #a9b9d0 700px, #c1d0e4 800px, #c8d4e6 1150px, #98899f 1205px, #c8e2fa 1225px, #cae3fb 1490px, #dcc8d8 1503px, #8c1e40 1520px, #a02444 1750px, #7f96bb 1795px, #a8c0de 1920px);
}
.qat {
  width: 325px;
  height: 28px;
  display: flex;
  align-items: center;
  padding-left: 10px;
  background: linear-gradient(#cfe2f7cc, #a9c3e2cc);
  border: 1px solid #8ca7c8;
  border-top: 0;
  border-left: 0;
  border-radius: 0 0 16px 0;
}
.qi {
  width: 17px;
  height: 17px;
  flex: none;
  overflow: visible;
}
.qmore {
  width: 20px;
  height: 28px;
  display: flex;
  align-items: center;
  padding-left: 9px;
}
.doc-title {
  margin-left: 327px;
  height: 30px;
  line-height: 30px;
  font-size: 15.4px;
  color: #161616;
  white-space: nowrap;
  text-shadow: 0 0 6px #fff;
}
.winbtns {
  position: absolute;
  right: 0;
  top: 0;
  width: 130px;
  height: 23px;
  display: flex;
  border: 1px solid #50688c;
  border-top: 0;
  border-radius: 0 0 5px 5px;
  background: linear-gradient(#a8bad4, #6f8cb2 50%, #8aa3c7);
}
.wb {
  display: flex;
  align-items: center;
  justify-content: center;
  color: #f4f8fc;
  font: bold 15px "Liberation Sans", sans-serif;
  border-right: 1px solid #5a7398;
}
.wb-min {
  width: 35px;
}
.wb-res {
  width: 32px;
}
.wb-close {
  flex: 1;
  border: 0;
}
.wb-min b {
  width: 15px;
  height: 5px;
  margin-top: 9px;
  background: #f0f4f9;
  border: 1px solid #506b8f;
}
.wb-res b {
  width: 11px;
  height: 15px;
  border: 3px solid #eef3f8;
  outline: 1px solid #506b8f;
}
.orb {
  position: absolute;
  left: 5px;
  top: 4px;
  width: 48px;
  height: 48px;
  border-radius: 50%;
  display: flex;
  align-items: center;
  justify-content: center;
  background: radial-gradient(circle at 50% 30%, #f4f8fc, #b9c9dc 60%, #8297b2);
  box-shadow: 0 1px 3px #4c5f7c;
}
.orb-in {
  width: 34px;
  height: 34px;
  border-radius: 9px;
  background: #2f95ea;
  color: #fff;
  font: bold 30px/34px "Liberation Sans", sans-serif;
  text-align: center;
}

/* ribbon */
.tabs {
  height: 32px;
  flex: none;
  padding: 2px 0 0 64px;
  display: flex;
  background: #bbd6f8;
}
.tab {
  width: 57px;
  text-align: center;
  line-height: 34px;
  font-size: 15px;
  color: #1d3c74;
}
.tab.on {
  width: 52px;
  margin-right: 2px;
  background: linear-gradient(#f5f9fe, #dbe8f8);
  border: 1px solid #a8c2e2;
  border-bottom: 0;
  border-radius: 3px 3px 0 0;
}
.ribbon {
  height: 120px;
  flex: none;
  display: flex;
  gap: 4px;
  padding: 4px 0 0 5px;
  background: linear-gradient(#dbe8f8, #bed5f1);
  border-bottom: 2px solid #8fadd2;
}
.rgroup {
  height: 115px;
  flex: none;
  display: flex;
  flex-direction: column;
  border: 1px solid #c4d6ec;
  border-radius: 3px;
  overflow: hidden;
  background: linear-gradient(#dbe7f8, #c5d6ee);
}
.rbody {
  height: 90px;
  margin-top: -1px;
  display: flex;
  flex: none;
}
.rlabel {
  flex: 1;
  background: #b9cfea;
  text-align: center;
  color: #5a7fae;
  font-size: 15px;
  line-height: 23px;
  margin-top: 1px;
}
.bigbtn {
  display: flex;
  flex-direction: column;
  align-items: center;
  flex: none;
  color: #1f3e78;
  font-size: 15px;
  white-space: nowrap;
}
.bigicon {
  height: 42px;
  margin-top: 7px;
  display: flex;
  align-items: flex-start;
  justify-content: center;
}
.bigtext {
  line-height: 20px;
  margin-top: 0;
}
.big-c {
  margin-top: 6px;
}
.rcol {
  flex: none;
  display: flex;
  flex-direction: column;
}
.ritem {
  height: 30px;
  display: flex;
  align-items: center;
  gap: 2px;
  color: #1f3e78;
  font-size: 15px;
  white-space: nowrap;
}
.ri {
  width: 17px;
  height: 17px;
  flex: none;
}
.ritem .caret {
  margin-left: 5px;
}
.helper {
  width: 49px;
  position: relative;
  overflow: visible;
  align-items: center;
  background: linear-gradient(#dbe7f8, #c5d6ee);
}
.hp-btn {
  width: 41px;
  height: 41px;
  margin-top: 5px;
  display: flex;
  align-items: center;
  justify-content: center;
  border: 1px solid #b3c9e3;
  border-radius: 4px;
  background: linear-gradient(#eaf2fc, #cfe0f4);
}
.hp-t {
  margin: 8px 0 7px;
  font-size: 15px;
  line-height: 20px;
  color: #1f3e78;
  white-space: nowrap;
}
.hp-face {
  position: absolute;
  left: -17px;
  top: -3px;
}

/* work area */
.work {
  height: 820px;
  flex: none;
  display: flex;
  align-items: flex-start;
  padding-top: 4px;
  background: #f0f1f3;
}
.vtabs {
  width: 28px;
  flex: none;
  padding: 8px 2px 0 1px;
  display: flex;
  flex-direction: column;
}
.vtab {
  display: flex;
  flex-direction: column;
  align-items: center;
  padding-top: 3px;
  font-size: 15.5px;
  line-height: 21px;
  background: #fff;
  border: 1px solid #777;
  border-right: 0;
  border-radius: 4px 0 0 6px;
  flex: none;
}
.vtab.on {
  background: #a8c8f0;
  font-weight: bold;
}
.dock {
  width: 417px;
  height: 816px;
  margin-right: 4px;
  flex: none;
  display: flex;
  flex-direction: column;
  padding-top: 1px;
}
.dock-title {
  height: 15px;
  flex: none;
  display: flex;
  justify-content: space-between;
  align-items: center;
  padding: 0 4px 0 0;
  font-size: 13.5px;
  background: #f0f0f0;
  border: 1px solid #777;
  border-radius: 2px;
}
.dock-title.second {
  margin-top: 6px;
  font-size: 12.5px;
}
.dt-icons {
  display: flex;
  gap: 9px;
  align-items: center;
}
.panes {
  height: 390px;
  margin-top: 2px;
  display: flex;
  gap: 3px;
  flex: none;
}
.pane {
  display: flex;
  flex-direction: column;
  border: 2px solid #6d97cf;
  background: #dce8fb;
  overflow: hidden;
}
.pane-l {
  width: 155px;
  margin-left: 0;
}
.pane-r {
  flex: 1;
}
.combo {
  height: 21px;
  margin: 0 1px;
  display: flex;
  align-items: center;
  justify-content: space-between;
  padding: 0 5px;
  background: #fff;
  font-size: 12.5px;
  flex: none;
}
.tabrow {
  height: 21px;
  display: flex;
  align-items: flex-end;
  gap: 2px;
  flex: none;
  padding-left: 1px;
}
.mini {
  width: 20px;
  height: 17px;
  background: #eef3fa;
  border: 1px solid #c5d3e6;
}
.pro-tab {
  width: 70px;
  height: 20px;
  overflow: hidden;
  background: #e4eaf2;
  border: 1px solid #999;
  border-bottom: 0;
  font-size: 15px;
  text-align: center;
  line-height: 28px;
  white-space: nowrap;
}
.tree {
  flex: 1;
  background: #fff;
  border-top: 2px solid #6d97cf;
  font-size: 12px;
}
.troot {
  height: 16px;
  display: flex;
  align-items: center;
  padding-left: 8px;
  white-space: nowrap;
}
.exp {
  width: 12px;
  font: 8px "DejaVu Sans", sans-serif;
  color: #333;
  flex: none;
}
.exp.hollow {
  color: #888;
}
.ti {
  width: 15px;
  height: 15px;
  flex: none;
  margin-right: 4px;
}
.kids {
  background-image: linear-gradient(#888 50%, transparent 50%), linear-gradient(#888 50%, transparent 50%);
  background-size: 1px 2px, 1px 2px;
  background-position: 12px 0, 22px 0;
  background-repeat: repeat-y;
}
.tkid {
  height: 16px;
  width: 140px;
  display: flex;
  align-items: center;
  padding-left: 31px;
  white-space: nowrap;
  margin-left: 0;
}
.tkid.sel {
  background: linear-gradient(#f2f2f2, #e4e4e4) 27px 0 / 92px 100% no-repeat;
}
.tree-tb {
  height: 35px;
  flex: none;
  display: flex;
  align-items: center;
  padding: 10px 6px 0 3px;
  background: linear-gradient(#dce8fb 8px, #f4f7fc 10px, #eef3fa);
}
.ttb-t {
  margin: 0 4px 0 3px;
  font-size: 15px;
}
.gap {
  margin-left: 13px;
  margin-right: 3px;
}
.gap-f {
  margin-left: 13px;
  margin-right: 3px;
}
.gap-b {
  margin-left: 8px;
  margin-right: 3px;
}
.gap3 {
  margin-left: 6px;
}
.az {
  font: bold 7px/7px "Liberation Sans", sans-serif;
  color: #3a80c0;
  text-align: center;
}
.azline {
  width: 1px;
  height: 14px;
  margin: 0 5px 0 3px;
  background: #444;
}
.more-r {
  margin-left: auto;
  display: flex;
  flex-direction: column;
  align-items: center;
  line-height: 13px;
  font-weight: bold;
  font-size: 12px;
  gap: 2px;
}
.tree-r {
  border-top: 1px solid #888;
}
.rrow {
  height: 16px;
  display: flex;
  align-items: center;
  white-space: nowrap;
  font-size: 12px;
}
.rrow.lv0 {
  padding-left: 10px;
}
.rrow.lv1 {
  padding-left: 20px;
}
.rrow.lv2 {
  padding-left: 39px;
}
.rrow.lv2 .ti {
  width: 13px;
  height: 13px;
  margin-right: 9px;
}
.rrow.sel {
  background: linear-gradient(#f2f2f2, #e4e4e4) 36px 0 / 300px 100% no-repeat;
}
.props {
  flex: 1;
  display: flex;
  background: #fff;
  border: 1px solid #6d97cf;
  border-top: 0;
  padding: 4px 0 0 1px;
  overflow: hidden;
}
.props-t {
  width: 393px;
  flex: none;
}
.pr {
  display: grid;
  grid-template-columns: 21px 91px 250px 31px;
  height: 19px;
  font-size: 14.5px;
}
.pr.pr-h {
  height: 23px;
}
.pr2 {
  display: grid;
  grid-template-columns: 20px 96px 92px;
  height: 19px;
  font-size: 14.5px;
}
.pr2.pr-h {
  height: 23px;
}
.c {
  border-right: 1px solid #bbb;
  border-bottom: 1px solid #bbb;
  overflow: hidden;
  white-space: nowrap;
  line-height: 18px;
}
.pr-h .c {
  background: linear-gradient(#fbfbfb, #ededed);
  line-height: 22px;
}
.pr-h .ctr {
  text-align: center;
}
.pr-h .orange,
.gr-h .orange {
  background: linear-gradient(#fbdc9b, #f2bb5e);
  color: #7a1a78;
}
.num {
  background: #f0f0f0;
  text-align: center;
  font-family: "Liberation Mono", monospace;
  font-size: 13.5px;
}
.numsel {
  background: #fbcf86 !important;
  color: #8a1a20;
}
.name {
  padding-left: 21px;
  display: flex;
  align-items: center;
}
.pr .name.grey,
.pr2 .name.grey {
  padding-left: 2px;
  color: #999;
}
.pbox {
  width: 13px;
  height: 13px;
  margin-right: 6px;
  flex: none;
  border: 1px solid #ccc;
  background: #eee;
  color: #222;
  font: 13px/11px "Liberation Mono", monospace;
  text-align: center;
}
.blue {
  color: #1414ee;
}
.namesel {
  background: #3f9bf4;
  color: #fff;
}
.val {
  padding-left: 3px;
}
.valsel {
  background: #deeefd;
}
.chk {
  display: flex;
  align-items: center;
  justify-content: center;
}
.cb {
  width: 13px;
  height: 13px;
  border: 1px solid #999;
  background: #f4f4f4;
}
.vscroll {
  flex: 1;
  position: relative;
  background: #f3f3f3;
  display: flex;
  flex-direction: column;
  align-items: center;
  justify-content: flex-end;
  padding-bottom: 9px;
}
.vthumb {
  position: absolute;
  left: 1px;
  right: 5px;
  top: 40px;
  height: 170px;
  background: linear-gradient(90deg, #f4f4f4, #c8c8c8);
  border: 1px solid #aaa;
  border-radius: 2px;
}

/* canvas */
.canvas-col {
  flex: 1;
  display: flex;
  flex-direction: column;
  min-width: 0;
}
.cad {
  display: block;
  background: #000;
  flex: none;
}
.t-g {
  fill: #10e010;
  font: 12px "Liberation Sans", sans-serif;
}
.t-g.cjk {
  font: 10px "Noto Sans CJK SC", sans-serif;
}
.t-g.tiny {
  font-size: 8px;
}
.t-w {
  fill: #eee;
  font: 12px "Liberation Sans", sans-serif;
}
.t-w.small {
  font-size: 11px;
}
.t-r {
  fill: #e01010;
  font: 12px "Liberation Sans", sans-serif;
}
.snapbar {
  height: 32px;
  display: flex;
  align-items: stretch;
  background: linear-gradient(#f7f8fc, #d3dbee 40%, #d6dcef);
  border-bottom: 1px solid #c8ccd6;
}
.snapgroup {
  width: 284px;
  display: flex;
  align-items: center;
  gap: 6px;
  padding: 6px 0 0 12px;
  font-size: 15px;
  border-right: 1px dotted #99a;
  flex: none;
  white-space: nowrap;
}
.snapgroup.second {
  gap: 8px;
  width: 293px;
}
.snap {
  line-height: 22px;
}
.snap:last-child {
  margin-left: 7px;
}
.snap.active {
  padding: 0 3px;
  background: #d2d2d2;
  border: 1px solid #7a8290;
  border-radius: 3px;
}
.snap2 {
  display: flex;
  align-items: center;
  gap: 3px;
}
.snapmark {
  width: 16px;
  height: 16px;
  flex: none;
}
.snapblank {
  width: 307px;
  margin: 3px 0 0 4px;
  background: #f0f0f0;
  border-right: 1px solid #ccc;
  flex: none;
}
.strip {
  height: 11px;
  flex: none;
  background: #a6c3e8;
}

/* status bar */
.status {
  height: 18px;
  flex: none;
  display: flex;
  gap: 3px;
  background: #f0f0f0;
  border-top: 1px solid #aaa;
  font-size: 12px;
  line-height: 17px;
  white-space: nowrap;
}
.st {
  padding-left: 2px;
  border-right: 1px solid #c6c6c6;
}
.s1 {
  width: 150px;
}
.s2 {
  width: 81px;
  padding-left: 1px;
}
.s3 {
  width: 102px;
}
.s4 {
  width: 50px;
}
.s5 {
  width: 754px;
  padding-left: 3px;
}
.s6 {
  flex: 1;
  border: 0;
}

/* taskbar */
.taskbar {
  height: 48px;
  flex: none;
  display: flex;
  align-items: center;
  border-top: 1px solid #0a2a52;
  background:
    linear-gradient(107deg, transparent 1395px, #ffffff30 1415px, transparent 1440px),
    linear-gradient(90deg, #1268b2, #0f5fa8 700px, #0a4c94 1300px, #0b3470 1780px);
  color: #fff;
}
.start {
  width: 42px;
  height: 42px;
  margin-left: 12px;
  border-radius: 50%;
  padding: 9px;
  display: grid;
  grid-template-columns: 1fr 1fr;
  gap: 1px;
  flex: none;
  background: radial-gradient(circle, #3f90c8, #0c3a6c 70%, #92b6d4 100%);
  border: 1px solid #b4cadd;
}
.start i {
  display: block;
}
.w1 {
  background: #f0642e;
  border-radius: 40% 0 0 0;
}
.w2 {
  background: #7dbc3c;
  border-radius: 0 40% 0 0;
}
.w3 {
  background: #3aa0e0;
  border-radius: 0 0 0 40%;
}
.w4 {
  background: #f3c327;
  border-radius: 0 0 40% 0;
}
.wheel {
  width: 40px;
  height: 40px;
  margin: 0 17px 0 31px;
  flex: none;
  border-radius: 50%;
  display: flex;
  align-items: center;
  justify-content: center;
  background: conic-gradient(#a040f0 0 60deg, #f04030 60deg 130deg, #f8e020 130deg 200deg, #40d080 200deg 280deg, #30a0e8 280deg 360deg);
}
.wheel i {
  width: 7px;
  height: 7px;
  border-radius: 50%;
  background: #fff;
}
.tb-btn {
  width: 67px;
  height: 46px;
  margin-right: 3px;
  flex: none;
  display: flex;
  align-items: center;
  justify-content: center;
  border: 1px solid #7fa9cf88;
  border-radius: 3px;
  background: linear-gradient(#ffffff40, #ffffff18 45%, #ffffff10);
}
.tb-btn.active {
  background: linear-gradient(#ffffff90, #ffffff50 50%, #ffffff70);
}
.sogou {
  width: 38px;
  height: 38px;
  border-radius: 50%;
  background: #fff;
  color: #2c7fe0;
  border: 2px solid #2c7fe0;
  font: bold 34px/34px "Liberation Sans", sans-serif;
  text-align: center;
}
.alogo {
  width: 40px;
  height: 40px;
  border-radius: 9px;
  background: #3898ea;
  color: #fff;
  font: bold 36px/40px "Liberation Sans", sans-serif;
  text-align: center;
}
.chrome {
  width: 38px;
  height: 38px;
  border-radius: 50%;
  display: flex;
  align-items: center;
  justify-content: center;
  background: conic-gradient(from -30deg, #e34133 0 120deg, #f8c91c 120deg 210deg, #2ea04f 210deg 360deg);
}
.chrome i {
  width: 16px;
  height: 16px;
  border-radius: 50%;
  background: #4a8bf0;
  border: 3px solid #fff;
  box-sizing: content-box;
}
.cadlogo {
  width: 40px;
  height: 40px;
  background: #0f5ea8;
  border: 3px solid #9aa6b0;
  border-radius: 4px;
  color: #e8f4ff;
  font: bold 15px/34px "Liberation Sans", sans-serif;
  text-align: center;
  letter-spacing: -1px;
}
.wordlogo {
  width: 34px;
  height: 40px;
  background: #fbfdff;
  clip-path: polygon(0 0, 100% 0, 100% 78%, 75% 100%, 0 100%);
  padding-top: 2px;
}
.wordlogo span {
  color: #1a4fa8;
  font: bold 26px/30px "Liberation Serif", serif;
}
.tray {
  margin-left: auto;
  height: 100%;
  display: flex;
  align-items: center;
  gap: 10px;
}
.ch {
  font: 13px "Liberation Mono", monospace;
}
.tri {
  flex: none;
}
.helpic {
  width: 18px;
  height: 18px;
  border-radius: 50%;
  background: #1c2fa8;
  border: 2px solid #aab;
  font: bold 12px/14px "Liberation Sans", sans-serif;
  text-align: center;
}
.trayflag {
  width: 10px;
  display: flex;
  flex-direction: column;
  align-items: center;
  gap: 8px;
}
.clock {
  width: 96px;
  margin-left: -3px;
  text-align: center;
  font: 16.5px/21px "Liberation Sans", sans-serif;
}
.showdesk {
  width: 14px;
  height: 100%;
  margin-left: -10px;
  background: linear-gradient(#3d6a9e, #0d3a78);
  border: 1px solid #ffffff44;
}

/* dialog */
.dlg {
  position: absolute;
  left: 395px;
  top: 303px;
  width: 1132px;
  height: 475px;
  display: flex;
  flex-direction: column;
  background: #e0ebfb;
  border: 2px solid #7f9fc8;
  border-top-color: #4c6d9c;
}
.dlg-title {
  height: 24px;
  flex: none;
  display: flex;
  align-items: center;
  padding-left: 2px;
  background: linear-gradient(#dceafb, #c2d6f1 50%, #d6e4f7);
  border-bottom: 1px solid #9dbde2;
}
.dlg-logo {
  width: 20px;
  height: 20px;
  border-radius: 4px;
  background: #2f95ea;
  color: #fff;
  font: bold 17px/20px "Liberation Sans", sans-serif;
  text-align: center;
}
.dlg-name {
  margin: -3px 0 0 5px;
  font-size: 15px;
  color: #7b8898;
}
.dlg-min {
  margin-left: auto;
  width: 7px;
  height: 2px;
  background: #8a939f;
  margin-top: 2px;
}
.dlg-x {
  margin: 0 6px 0 16px;
  font: bold 12px "Liberation Sans", sans-serif;
  color: #8a939f;
}
.dlg-body {
  flex: 1;
  display: flex;
  min-height: 0;
  padding: 3px 1px 0 1px;
}
.col-l {
  width: 339px;
  flex: none;
  display: flex;
  flex-direction: column;
  padding-right: 1px;
}
.col-m {
  width: 566px;
  flex: none;
  display: flex;
  flex-direction: column;
  padding: 0 2px 0 2px;
  border-left: 1px solid #f4f8fd;
}
.col-r {
  flex: 1;
  position: relative;
  padding-left: 3px;
  border-left: 1px solid #c9d6e6;
}
.btnrow {
  height: 20px;
  flex: none;
  display: flex;
  justify-content: flex-end;
  padding-right: 13px;
}
.dbtn {
  height: 20px;
  padding: 0 4px;
  font-family: "Noto Sans CJK SC", sans-serif;
  font-size: 13.5px;
  line-height: 17px;
  color: #222;
  border: 1px solid #7c9ac0;
  border-radius: 3px;
  background: linear-gradient(#f4f8fd, #e3ecf8 50%, #d2dfef);
  white-space: nowrap;
}
.btnrow .dbtn {
  width: 88px;
}
.gbox {
  border: 1px solid #cbdaec;
  border-radius: 3px;
  display: flex;
  flex-direction: column;
}
.gbox-top {
  height: 277px;
  margin-top: 8px;
  flex: none;
}
.gbox-bot {
  margin: 11px 4px 6px 3px;
  flex: 1;
  min-height: 0;
  padding: 1px;
}
.gbox-mid {
  height: 377px;
  margin-top: 8px;
  flex: none;
}
.glabel {
  margin: -10px 0 0 6px;
  padding: 0 1px;
  width: fit-content;
  height: 18px;
  line-height: 18px;
  font-size: 13px;
  background: #e0ebfb;
  white-space: nowrap;
}
.glabel.small {
  font-size: 12px;
}
.dtb {
  height: 27px;
  margin: -1px 1px 1px;
  display: flex;
  align-items: center;
  gap: 1px;
  flex: none;
  padding-left: 1px;
  background: linear-gradient(#f6f8fd, #e4eaf7 30%, #ced9ee 60%, #dfe6f4);
  font-size: 15px;
  white-space: nowrap;
  overflow: hidden;
  position: relative;
}
.grip {
  width: 3px;
  height: 20px;
  margin-right: 2px;
  flex: none;
  background-image: linear-gradient(#999 50%, transparent 50%);
  background-size: 2px 3px;
}
.grip.gm {
  margin-right: 4px;
}
.tbi {
  display: flex;
  align-items: center;
  gap: 3px;
  padding: 0 3px 0 1px;
}
.tbi.dis {
  color: #999;
  padding: 0 5px;
}
.tbi.wide {
  padding: 0 4px 0 3px;
}
.tbi.wide.second {
  margin-left: 2px;
}
.tbi.ml4 {
  margin-left: 4px;
}
.tbi.up {
  padding: 0 0 0 1px;
  gap: 8px;
}
.tsep {
  width: 1px;
  height: 22px;
  margin: 0 4px 0 0;
  flex: none;
  background: #7d8794;
}
.tsep.ml {
  margin-left: 3px;
}
.undo {
  margin: 0 1px;
  flex: none;
}
.tmore {
  position: absolute;
  right: 4px;
  top: -3px;
  font-weight: bold;
  font-size: 14px;
}
.grid {
  flex: 1;
  min-height: 0;
  background: #fff;
  border: 1px solid #aaa;
  display: flex;
  flex-direction: column;
  font-size: 14.5px;
}
.grid.mid {
  position: relative;
}
.gr {
  height: 19px;
  display: grid;
  flex: none;
}
.gr-h {
  height: 20px;
}
.g-tree {
  grid-template-columns: 21px 223px 65px;
}
.g-back {
  grid-template-columns: 22px 133px 88px;
}
.g-mid {
  grid-template-columns: 34px 85px 97px 116px 110px 109px 6px;
}
.gc {
  border-right: 1px solid #bbb;
  border-bottom: 1px solid #bbb;
  white-space: nowrap;
  overflow: hidden;
  line-height: 18px;
  padding-left: 1px;
}
.gr-h .gc {
  background: linear-gradient(#fbfbfb, #ededed);
}
.gc.ctr {
  text-align: center;
}
.gc.ind {
  padding-left: 20px;
}
.gc.cellsel {
  position: relative;
  margin: -1px 0 -1px -1px;
  height: 21px;
  background: #deeefd;
  border: 3px solid #000;
  overflow: visible;
}
.gc.cellsel i {
  position: absolute;
  right: -4px;
  bottom: -4px;
  width: 5px;
  height: 5px;
  background: #000;
}
.hscroll {
  position: absolute;
  left: 0;
  right: 0;
  bottom: 0;
  height: 21px;
  display: flex;
  align-items: center;
  background: #ececec;
}
.hthumb {
  width: 290px;
  height: 19px;
  margin-left: 24px;
  display: flex;
  align-items: center;
  justify-content: center;
  background: linear-gradient(#ededed, #c8c8c8);
  border: 1px solid #999;
  border-radius: 2px;
}
.hthumb span {
  width: 7px;
  height: 8px;
  border-left: 1px solid #666;
  border-right: 1px solid #666;
  background: linear-gradient(90deg, transparent 2px, #666 2px 3px, transparent 3px);
}
.arr {
  position: absolute;
  width: 0;
  height: 0;
  border: 4px solid transparent;
}
.arr.l {
  left: 5px;
  border-right: 5px solid #555;
  border-left: 0;
}
.arr.r {
  right: 5px;
  border-left: 5px solid #555;
  border-right: 0;
}
.dlg-actions {
  height: 36px;
  display: flex;
  justify-content: flex-end;
  align-items: center;
  gap: 15px;
  padding: 3px 13px 0 0;
  flex: none;
}
.dlg-actions .dbtn {
  width: 75px;
  height: 25px;
  font-size: 12.5px;
}
.dbtn.off {
  color: #9aa;
  border-color: #bcc8d8;
}
.dbtn.cancel {
  border-color: #6a8ab5;
}
.rlab {
  height: 17px;
  margin-top: -4px;
  padding-left: 5px;
  font-size: 13px;
  line-height: 17px;
}
.rbtn-float {
  position: absolute;
  left: -114px;
  top: 0;
}
.rbtn-float .dbtn {
  width: 98px;
}
.rpanel {
  height: 431px;
  margin-right: 3px;
  padding: 0 0 0 2px;
  background: #fff;
  border: 1px solid #cbdaec;
}
</style>
